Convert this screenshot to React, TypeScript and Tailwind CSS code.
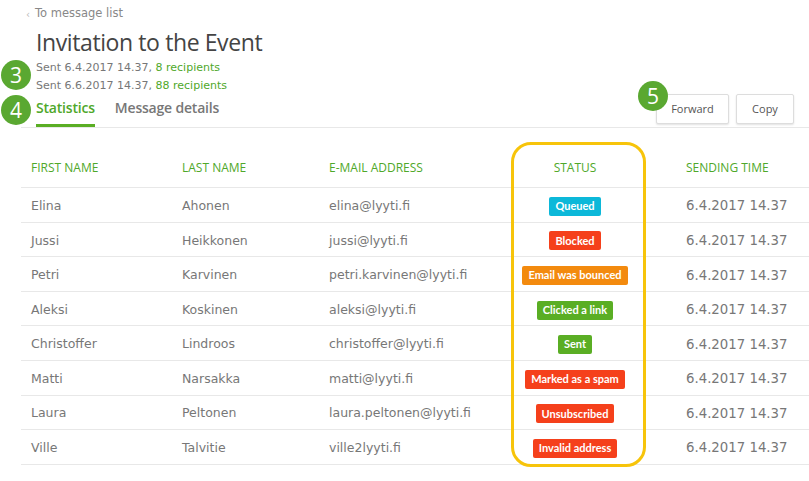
import React from 'react';

type Status = { label: string; color: string };

const rows: { first: string; last: string; email: string; status: Status; time: string }[] = [
  { first: 'Elina', last: 'Ahonen', email: 'elina@lyyti.fi', status: { label: 'Queued', color: 'bg-[#0cb8d9]' }, time: '6.4.2017 14.37' },
  { first: 'Jussi', last: 'Heikkonen', email: 'jussi@lyyti.fi', status: { label: 'Blocked', color: 'bg-[#f5401b]' }, time: '6.4.2017 14.37' },
  { first: 'Petri', last: 'Karvinen', email: 'petri.karvinen@lyyti.fi', status: { label: 'Email was bounced', color: 'bg-[#f38a0e]' }, time: '6.4.2017 14.37' },
  { first: 'Aleksi', last: 'Koskinen', email: 'aleksi@lyyti.fi', status: { label: 'Clicked a link', color: 'bg-[#5aae24]' }, time: '6.4.2017 14.37' },
  { first: 'Christoffer', last: 'Lindroos', email: 'christoffer@lyyti.fi', status: { label: 'Sent', color: 'bg-[#5aae24]' }, time: '6.4.2017 14.37' },
  { first: 'Matti', last: 'Narsakka', email: 'matti@lyyti.fi', status: { label: 'Marked as a spam', color: 'bg-[#f5401b]' }, time: '6.4.2017 14.37' },
  { first: 'Laura', last: 'Peltonen', email: 'laura.peltonen@lyyti.fi', status: { label: 'Unsubscribed', color: 'bg-[#f5401b]' }, time: '6.4.2017 14.37' },
  { first: 'Ville', last: 'Talvitie', email: 'ville2lyyti.fi', status: { label: 'Invalid address', color: 'bg-[#f5401b]' }, time: '6.4.2017 14.37' },
];

const cols = 'grid grid-cols-[161px_147px_183px_126px_1fr]';

// numbered annotation dot
const Marker = ({ n, className }: { n: number; className: string }) => (
  <div
    className={`absolute w-[30px] h-[30px] rounded-full bg-[#5aa831] text-white flex items-center justify-center text-[21px] font-['Open_Sans',sans-serif] leading-none ${className}`}
  >
    {n}
  </div>
);

export default function App() {
  return (
    <div className="relative w-[809px] h-[481px] bg-white overflow-hidden font-['DejaVu_Sans',Verdana,sans-serif] text-[#777]">
      <Marker n={3} className="left-[1px] top-[60px]" />
      <Marker n={4} className="left-[1px] top-[95px]" />
      <Marker n={5} className="left-[638px] top-[81px]" />

      <div className="pl-[36px] pt-[7px]">
        <div className="flex items-center -ml-[10px] text-[11.5px] text-[#888] h-[14px]">
          <span className="text-[#bbb] mr-[5px] text-[10px]">‹</span>
          To message list
        </div>
        <h1 className="mt-[7px] text-[23px] leading-[28px] text-[#444] font-medium font-['Open_Sans',sans-serif] tracking-[-0.4px]">
          Invitation to the Event
        </h1>
        <div className="mt-[3px] text-[11px] leading-[18px]">
          <div>
            Sent 6.4.2017 14.37, <span className="text-[#4fa82a]">8 recipients</span>
          </div>
          <div>
            Sent 6.6.2017 14.37, <span className="text-[#4fa82a]">88 recipients</span>
          </div>
        </div>
      </div>

      <div className="ml-[21px] -mt-[1px] flex items-end border-b border-[#e8e8e8] pr-[15px]">
        <div className="flex gap-[20px] pl-[15px] font-['Open_Sans',sans-serif] text-[14px] font-semibold tracking-[-0.2px]">
          <div className="text-[#4fa82a] border-b-[3px] border-[#5aae24] pb-[6px]">Statistics</div>
          <div className="text-[#777] pb-[6px] border-b-[3px] border-transparent">Message details</div>
        </div>
        <div className="ml-auto flex gap-[7px] mb-[3px]">
          <button className="w-[73px] h-[30px] bg-white border border-[#ddd] rounded-[2px] shadow-[0_1px_2px_rgba(0,0,0,0.12)] text-[11px] text-[#555] font-['Open_Sans',sans-serif]">
            Forward
          </button>
          <button className="w-[58px] h-[30px] bg-white border border-[#ddd] rounded-[2px] shadow-[0_1px_2px_rgba(0,0,0,0.12)] text-[11px] text-[#555] font-['Open_Sans',sans-serif]">
            Copy
          </button>
        </div>
      </div>

      <div className="relative ml-[21px] mt-[21px]">
        <div className="absolute left-[490px] -top-[7px] w-[135px] h-[325px] border-[3px] border-[#f7c40a] rounded-[20px] pointer-events-none" />
        <div className={`${cols} h-[39px] items-center border-b border-[#e8e8e8] text-[12px] font-medium text-[#4fa82a] font-['Open_Sans',sans-serif]`}>
          <div className="pl-[10px]">FIRST NAME</div>
          <div>LAST NAME</div>
          <div>E-MAIL ADDRESS</div>
          <div className="text-center">STATUS</div>
          <div className="pl-[48px]">SENDING TIME</div>
        </div>
        {rows.map((r) => (
          <div key={r.email} className={`${cols} h-[34.6px] items-center border-b border-[#e8e8e8] text-[12.5px] pt-[3px]`}>
            <div className="pl-[10px]">{r.first}</div>
            <div>{r.last}</div>
            <div>{r.email}</div>
            <div className="flex justify-center">
              <span className={`${r.status.color} text-white text-[11px] font-bold rounded-[2px] px-[6px] h-[19px] flex items-center font-['Lato',sans-serif]`}>
                {r.status.label}
              </span>
            </div>
            <div className="pl-[48px] text-[13.3px]">{r.time}</div>
          </div>
        ))}
      </div>
    </div>
  );
}
